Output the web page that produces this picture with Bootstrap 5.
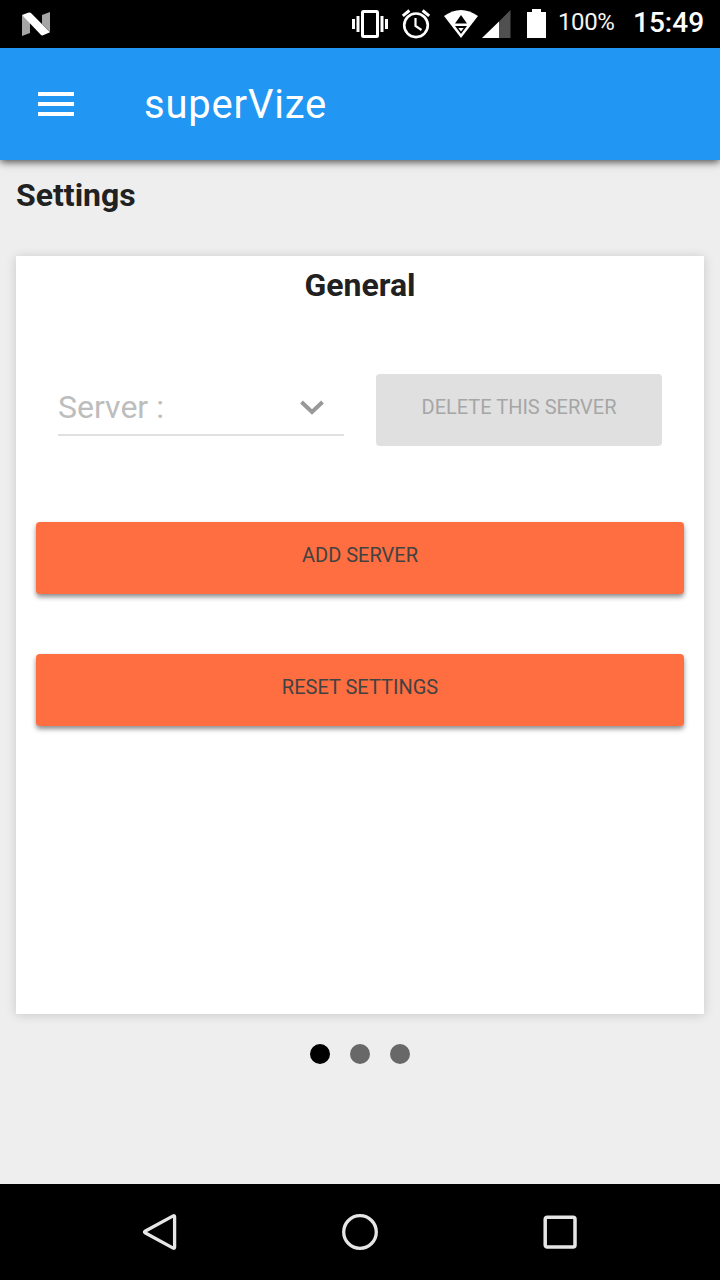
<!DOCTYPE html>
<html lang="en">
<head>
<meta charset="utf-8">
<meta name="viewport" content="width=device-width, initial-scale=1">
<title>superVize</title>
<link href="https://cdn.jsdelivr.net/npm/bootstrap@5.3.0/dist/css/bootstrap.min.css" rel="stylesheet">
<style>
  body { font-family: Roboto, "Liberation Sans", sans-serif; background: #eee; color: #212121; }
  svg { display: block; flex: none; }
  .status { height: 48px; padding: 0 16px 0 22px; white-space: nowrap; }
  .battery-text { font-size: 24px; line-height: 44px; color: #f4f4f4; width: 56px; margin-left: 11px; letter-spacing: -.4px; }
  .clock { font-size: 28px; font-weight: 500; line-height: 46px; width: 71px; margin-left: 19px; }
  .topbar { height: 112px; background: #2196f3; padding: 0 38px; gap: 70px; box-shadow: 0 2px 8px rgba(0,0,0,.7); z-index: 1; clip-path: inset(0 0 -20px 0); }
  .app-title { font-size: 40px; line-height: 56px; letter-spacing: .8px; padding-top: 2px; }
  .heading { font-size: 32px; font-weight: 700; line-height: 40px; }
  .page-heading { padding: 15px 16px 0; height: 96px; }
  .panel { height: 758px; margin: 0 16px; padding: 9px 20px 0; box-shadow: 0 1px 10px rgba(0,0,0,.16); }
  .server-row { margin: 69px 22px 0; gap: 32px; height: 72px; }
  .server-select { width: 286px; height: 62px; padding: 7px 20px 0 0; border-bottom: 2px solid #e0e0e0; color: #bdbdbd; font-size: 32px; line-height: 53px; }
  .action { height: 72px; border: 0; border-radius: 4px; font-size: 20px; line-height: 30px; padding: 0 0 6px; font-weight: 400; }
  .action-delete, .action-delete:disabled { width: 286px; background: #e0e0e0; color: #a6a6a6; opacity: 1; }
  .action-main, .action-main:hover { background: #ff6e40; color: #424242; box-shadow: 0 3px 5px rgba(0,0,0,.45); }
  .first-action { margin-top: 76px; }
  .second-action { margin-top: 60px; }
  .dots { gap: 20px; margin-top: 30px; }
  .dot { width: 20px; height: 20px; background: #686868; }
  .dot.active { background: #000; }
  .softkeys { height: 96px; padding: 0 142px; }
</style>
</head>
<body class="d-flex flex-column vh-100 overflow-hidden">
<header class="status bg-black text-white d-flex align-items-start flex-shrink-0">
  <svg class="me-auto" width="28" height="48" viewBox="22 0 28 48"><path d="M22 15v21l8-3V21zM42 15l8-3v20l-8-8z" fill="#a5a5a5"/><path d="M22 15l6-2.200q2-.8 3.500.7L50 32.200 43 35.300q-1.200.5-2.200-.5z" fill="#fff"/></svg>
  <svg width="195" height="48" viewBox="352 0 195 48" fill="#fff">
    <path d="M352 19h3v10h-3zM356.500 16h3v16h-3zM380.500 16h3v16h-3zM385 19h3v10h-3z"/>
    <rect x="362.500" y="11.500" width="15" height="25" rx="1" fill="none" stroke="#fff" stroke-width="3"/>
    <g fill="none" stroke="#fff"><circle cx="416" cy="25.300" r="11.800" stroke-width="2.600"/><path d="M415.500 18v8l6 4" stroke-width="2.200"/><path d="M402.800 15.800l6.600-5.300M422.600 10.500l6.600 5.300" stroke-width="3"/></g>
    <path d="M444 16Q461 4 478 16L461 38z"/>
    <path d="M461 15l6 8.500h-12zM455 26h12L461 34z" fill="#000"/><path d="M458.300 28h5.400l-2.700 3.600z"/>
    <path d="M482 38l17-16.500V38z"/><path d="M499 21.500L510.500 10v28H499z" fill="#505050"/>
    <path d="M527 12h5V9h9v3h5v26h-19z"/>
  </svg>
  <span class="battery-text">100%</span>
  <span class="clock">15:49</span>
</header>
<nav class="topbar d-flex align-items-center position-relative flex-shrink-0 text-white">
  <svg width="36" height="24" viewBox="0 0 36 24" role="button" aria-label="Menu"><path d="M0 0h36v4H0zM0 10h36v4H0zM0 20h36v4H0z" fill="#fff"/></svg>
  <span class="app-title">superVize</span>
</nav>
<main class="flex-grow-1">
  <h1 class="heading page-heading m-0">Settings</h1>
  <section class="panel bg-white">
    <h2 class="heading text-center m-0">General</h2>
    <div class="server-row d-flex">
      <div class="server-select d-flex align-items-center justify-content-between" role="button">
        <span>Server :</span>
        <svg width="24" height="15" viewBox="0 0 24 15"><path d="M1.500 2L12 12 22.500 2" fill="none" stroke="#999" stroke-width="4"/></svg>
      </div>
      <button class="btn action action-delete" disabled>DELETE THIS SERVER</button>
    </div>
    <button class="btn action action-main w-100 first-action">ADD SERVER</button>
    <button class="btn action action-main w-100 second-action">RESET SETTINGS</button>
  </section>
  <div class="dots d-flex justify-content-center">
    <span class="dot active rounded-circle"></span><span class="dot rounded-circle"></span><span class="dot rounded-circle"></span>
  </div>
</main>
<footer class="softkeys bg-black d-flex align-items-center justify-content-between flex-shrink-0">
  <svg width="36" height="36" viewBox="0 0 36 36" fill="none" stroke="#e6e6e6" stroke-width="3.300" stroke-linejoin="round"><path d="M3 17.200Q2 18 3 18.800L31.200 34.100Q32.600 34.700 32.600 33.100V2.900Q32.600 1.300 31.200 1.900z"/></svg>
  <svg width="36" height="36" viewBox="0 0 36 36" fill="none" stroke="#e6e6e6" stroke-width="3.300"><circle cx="18" cy="18" r="16.300"/></svg>
  <svg width="36" height="36" viewBox="0 0 36 36" fill="none" stroke="#e6e6e6" stroke-width="3.500"><rect x="3.200" y="3.200" width="29.800" height="29.800" rx="2"/></svg>
</footer>
<script src="https://cdn.jsdelivr.net/npm/bootstrap@5.3.0/dist/js/bootstrap.bundle.min.js"></script>
</body>
</html>
